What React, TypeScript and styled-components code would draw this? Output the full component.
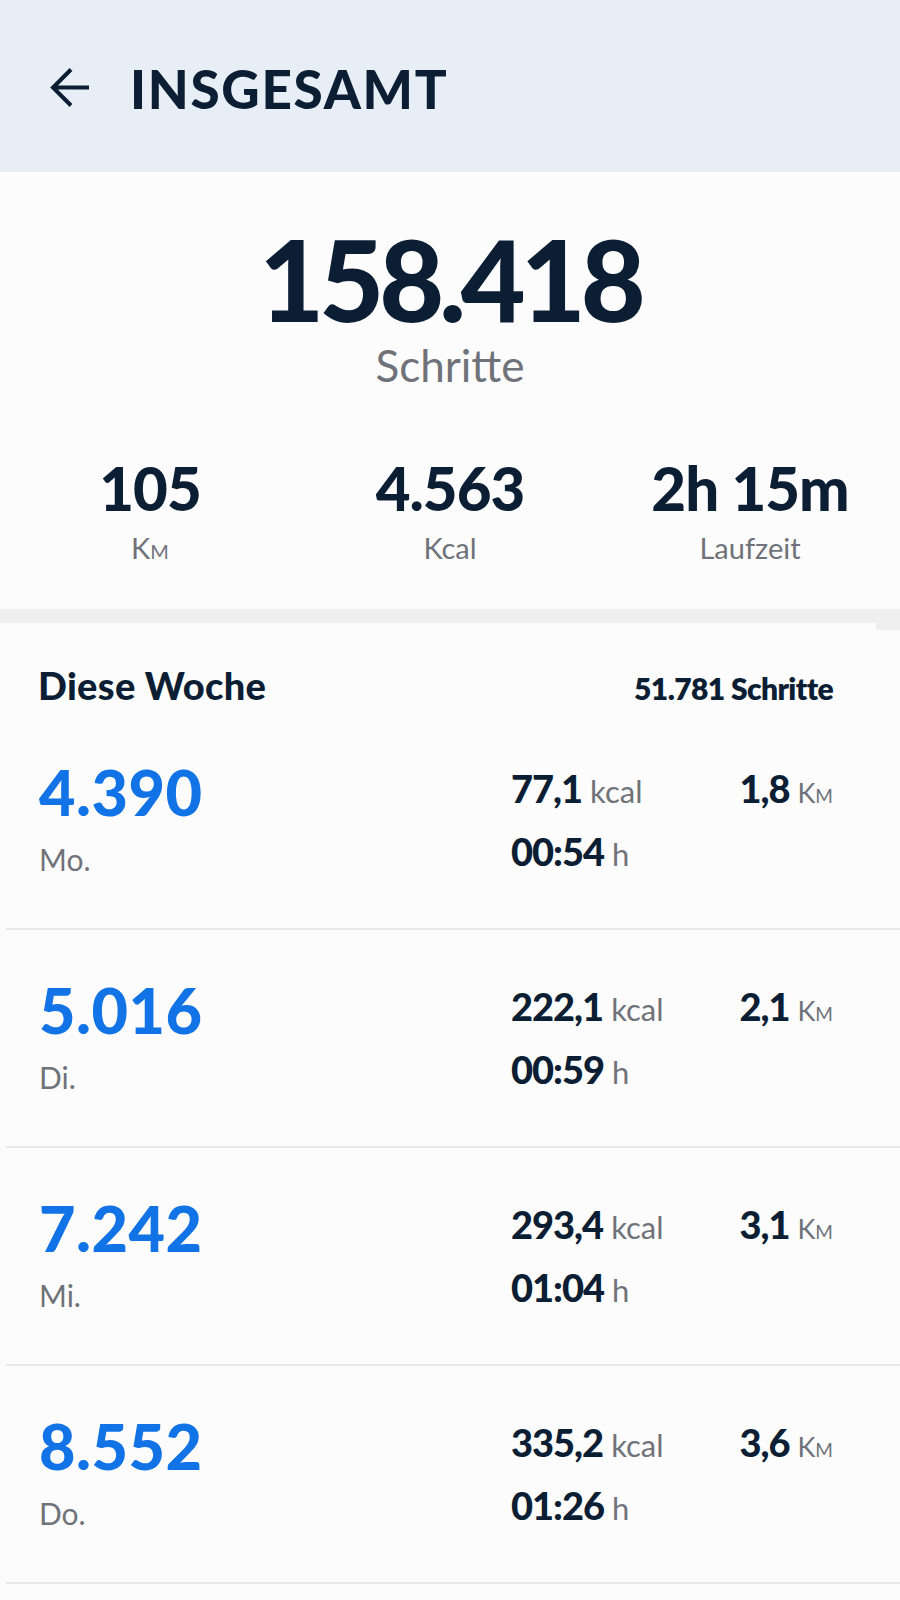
import React from 'react';
import styled, { createGlobalStyle } from 'styled-components';

const GlobalStyle = createGlobalStyle`
	body {
		margin: 0;
		background: #fcfcfc;
		font-family: Lato, 'Noto Sans', sans-serif;
		color: #0b1e33;
	}
`;

interface DayStat {
	steps: string;
	day: string;
	kcal: string;
	time: string;
	km: string;
}

const days: DayStat[] = [
	{ steps: '4.390', day: 'Mo.', kcal: '77,1', time: '00:54', km: '1,8' },
	{ steps: '5.016', day: 'Di.', kcal: '222,1', time: '00:59', km: '2,1' },
	{ steps: '7.242', day: 'Mi.', kcal: '293,4', time: '01:04', km: '3,1' },
	{ steps: '8.552', day: 'Do.', kcal: '335,2', time: '01:26', km: '3,6' },
];

const Page = styled.div`
	width: 900px;
	min-height: 1600px;
	background: #fcfcfc;
`;

const Header = styled.header`
	height: 172px;
	box-sizing: border-box;
	background: #e7eef6;
	display: flex;
	align-items: center;
	gap: 40px;
	padding: 4px 0 0 50px;
`;

const Title = styled.h1`
	margin: 0;
	font-size: 53px;
	line-height: 53px;
	font-weight: 900;
	letter-spacing: 1.7px;
`;

const Hero = styled.section`
	padding: 62px 0 43px;
	text-align: center;
`;

const BigNumber = styled.div`
	font-size: 112px;
	line-height: 90px;
	font-weight: 900;
	letter-spacing: -5px;
`;

const Caption = styled.div`
	margin-top: 16px;
	font-size: 44px;
	line-height: 50px;
	color: #6f7379;
`;

const StatsRow = styled.div`
	display: grid;
	grid-template-columns: 1fr 1fr 1fr;
	margin-top: 68px;
`;

const Stat = styled.div`
	display: flex;
	flex-direction: column;
	align-items: center;
`;

const StatValue = styled.div`
	font-size: 60px;
	line-height: 60px;
	font-weight: 900;
	letter-spacing: -1px;
`;

const StatLabel = styled.div<{ smallCaps?: boolean }>`
	margin-top: 12px;
	font-size: 29px;
	line-height: 36px;
	color: #6f7379;
	font-variant: ${({ smallCaps }) => (smallCaps ? 'small-caps' : 'normal')};
`;

const Band = styled.div`
	position: relative;
	height: 14px;
	background: #efefef;

	&::after {
		content: '';
		position: absolute;
		right: 0;
		top: 100%;
		width: 24px;
		height: 7px;
		background: #efefef;
	}
`;

const WeekHead = styled.div`
	display: flex;
	justify-content: space-between;
	align-items: baseline;
	padding: 40px 67px 4px 38px;
`;

const WeekTitle = styled.h2`
	margin: 0;
	font-size: 38px;
	line-height: 44px;
	font-weight: 900;
	letter-spacing: 0.3px;
`;

const WeekTotal = styled.div`
	font-size: 30px;
	line-height: 40px;
	font-weight: 800;
	letter-spacing: -0.6px;
`;

const Row = styled.div`
	display: flex;
	align-items: flex-start;
	height: 216px;
	margin-left: 6px;
	padding: 0 67px 0 33px;
	border-bottom: 2px solid #e8e8e8;
`;

const DayCol = styled.div`
	flex: 1;
	padding-top: 45px;
`;

const Steps = styled.div`
	font-size: 63px;
	line-height: 70px;
	font-weight: 900;
	color: #1273e6;
	letter-spacing: 0.5px;
`;

const DayName = styled.div`
	margin-top: 14px;
	font-size: 30px;
	line-height: 36px;
	color: #6f7379;
`;

const Metrics = styled.div`
	width: 322px;
	display: grid;
	grid-template-columns: 1fr auto;
	row-gap: 12px;
	padding-top: 53px;
`;

const Metric = styled.div<{ end?: boolean }>`
	display: flex;
	align-items: baseline;
	gap: 8px;
	justify-content: ${({ end }) => (end ? 'flex-end' : 'flex-start')};
	line-height: 46px;
`;

const MetricValue = styled.span`
	font-size: 38px;
	font-weight: 900;
	letter-spacing: -1px;
`;

const Unit = styled.span<{ small?: boolean }>`
	font-size: ${({ small }) => (small ? 27 : 31)}px;
	color: #6f7379;
	font-variant: ${({ small }) => (small ? 'small-caps' : 'normal')};
`;

function BackArrow(): JSX.Element {
	return (
		<svg width="40" height="40" viewBox="0 0 40 40" fill="none">
			<path
				d="M39 19.5H3M21 1.5L3 19.5L21 37.5"
				stroke="#0b1e33"
				strokeWidth="4"
			/>
		</svg>
	);
}

export default function App(): JSX.Element {
	return (
		<Page>
			<GlobalStyle />
			<Header>
				<BackArrow />
				<Title>INSGESAMT</Title>
			</Header>

			<Hero>
				<BigNumber>158.418</BigNumber>
				<Caption>Schritte</Caption>
				<StatsRow>
					<Stat>
						<StatValue>105</StatValue>
						<StatLabel smallCaps>Km</StatLabel>
					</Stat>
					<Stat>
						<StatValue>4.563</StatValue>
						<StatLabel>Kcal</StatLabel>
					</Stat>
					<Stat>
						<StatValue>2h 15m</StatValue>
						<StatLabel>Laufzeit</StatLabel>
					</Stat>
				</StatsRow>
			</Hero>

			<Band />

			<WeekHead>
				<WeekTitle>Diese Woche</WeekTitle>
				<WeekTotal>51.781 Schritte</WeekTotal>
			</WeekHead>

			{days.map((d) => (
				<Row key={d.day}>
					<DayCol>
						<Steps>{d.steps}</Steps>
						<DayName>{d.day}</DayName>
					</DayCol>
					<Metrics>
						<Metric>
							<MetricValue>{d.kcal}</MetricValue>
							<Unit>kcal</Unit>
						</Metric>
						<Metric end>
							<MetricValue>{d.km}</MetricValue>
							<Unit small>Km</Unit>
						</Metric>
						<Metric>
							<MetricValue>{d.time}</MetricValue>
							<Unit>h</Unit>
						</Metric>
					</Metrics>
				</Row>
			))}
		</Page>
	);
}
